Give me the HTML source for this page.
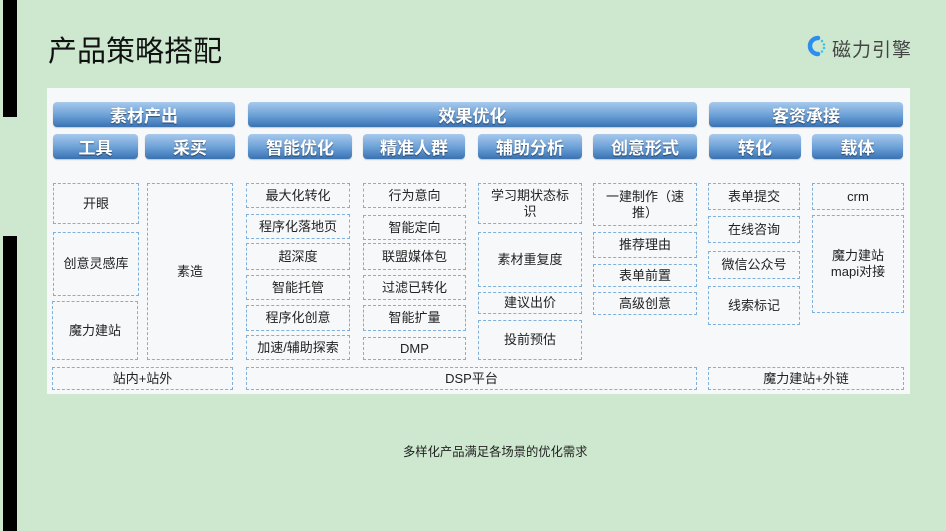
<!DOCTYPE html>
<html><head><meta charset="utf-8"><style>
*{margin:0;padding:0;box-sizing:border-box}
body{width:946px;height:531px;background:#cde8cf;position:relative;overflow:hidden;font-family:"Liberation Sans","Noto Sans CJK SC",sans-serif}
.bar{position:absolute;background:#000;left:3px;width:14px}
.title{position:absolute;left:48px;top:28px;font-size:29px;color:#111;letter-spacing:0px}
.panel{position:absolute;left:47px;top:88px;width:863px;height:306px;background:#f7f8f9}
.h{position:absolute;border-radius:4px;background:linear-gradient(#a8c9ec,#6a9fd6 55%,#3a72b2);color:#fff;font-weight:bold;font-size:17px;display:flex;align-items:center;justify-content:center;text-shadow:0 1px 1px rgba(0,0,0,.5);box-shadow:0 1px 1px rgba(0,0,0,.2)}
.b{position:absolute;border:1.5px dashed #7fb0dc;display:flex;align-items:center;justify-content:center;text-align:center;font-size:13px;color:#222;line-height:16px}
.cap{position:absolute;left:403px;top:442px;font-size:12.3px;color:#222}
.logo{position:absolute;left:832px;top:35px;font-size:19px;color:#444;letter-spacing:1px}
</style></head><body>
<div class="bar" style="top:0;height:117px"></div>
<div class="bar" style="top:236px;height:295px"></div>
<div class="title">产品策略搭配</div>
<svg style="position:absolute;left:803px;top:33px" width="26" height="26" viewBox="0 0 26 26">
<path d="M15 5 A8 8 0 1 0 15 21" fill="none" stroke="#2d8ef0" stroke-width="4.5" stroke-linecap="round"/>
<circle cx="19" cy="8" r="1.3" fill="#3cc6e8"/><circle cx="21" cy="11.5" r="1.3" fill="#3cc6e8"/><circle cx="21" cy="15" r="1.3" fill="#3cc6e8"/><circle cx="19" cy="18.5" r="1.3" fill="#3cc6e8"/>
</svg>
<div class="logo">磁力引擎</div>
<div class="panel"></div>
<div class="h" style="left:53px;top:102px;width:182px;height:25px">素材产出</div>
<div class="h" style="left:248px;top:102px;width:449px;height:25px">效果优化</div>
<div class="h" style="left:709px;top:102px;width:194px;height:25px">客资承接</div>
<div class="h" style="left:53px;top:134px;width:85px;height:25px">工具</div>
<div class="h" style="left:145px;top:134px;width:90px;height:25px">采买</div>
<div class="h" style="left:248px;top:134px;width:104px;height:25px">智能优化</div>
<div class="h" style="left:363px;top:134px;width:102px;height:25px">精准人群</div>
<div class="h" style="left:478px;top:134px;width:104px;height:25px">辅助分析</div>
<div class="h" style="left:593px;top:134px;width:104px;height:25px">创意形式</div>
<div class="h" style="left:709px;top:134px;width:92px;height:25px">转化</div>
<div class="h" style="left:812px;top:134px;width:91px;height:25px">载体</div>

<div class="b" style="left:53px;top:183px;width:86px;height:41px">开眼</div>
<div class="b" style="left:53px;top:232px;width:86px;height:64px">创意灵感库</div>
<div class="b" style="left:52px;top:301px;width:86px;height:59px">魔力建站</div>
<div class="b" style="left:147px;top:183px;width:86px;height:177px">素造</div>
<div class="b" style="left:52px;top:367px;width:181px;height:23px">站内+站外</div>

<div class="b" style="left:246px;top:183px;width:104px;height:25px">最大化转化</div>
<div class="b" style="left:246px;top:214px;width:104px;height:25px">程序化落地页</div>
<div class="b" style="left:246px;top:243px;width:104px;height:27px">超深度</div>
<div class="b" style="left:246px;top:275px;width:104px;height:25px">智能托管</div>
<div class="b" style="left:246px;top:305px;width:104px;height:26px">程序化创意</div>
<div class="b" style="left:246px;top:335px;width:104px;height:25px">加速/辅助探索</div>

<div class="b" style="left:363px;top:183px;width:103px;height:25px">行为意向</div>
<div class="b" style="left:363px;top:215px;width:103px;height:25px">智能定向</div>
<div class="b" style="left:363px;top:243px;width:103px;height:27px">联盟媒体包</div>
<div class="b" style="left:363px;top:275px;width:103px;height:25px">过滤已转化</div>
<div class="b" style="left:363px;top:305px;width:103px;height:26px">智能扩量</div>
<div class="b" style="left:363px;top:337px;width:103px;height:23px">DMP</div>

<div class="b" style="left:478px;top:183px;width:104px;height:41px">学习期状态标<br>识</div>
<div class="b" style="left:478px;top:232px;width:104px;height:55px">素材重复度</div>
<div class="b" style="left:478px;top:292px;width:104px;height:22px">建议出价</div>
<div class="b" style="left:478px;top:320px;width:104px;height:40px">投前预估</div>

<div class="b" style="left:593px;top:183px;width:104px;height:43px">一建制作（速<br>推）</div>
<div class="b" style="left:593px;top:232px;width:104px;height:26px">推荐理由</div>
<div class="b" style="left:593px;top:264px;width:104px;height:23px">表单前置</div>
<div class="b" style="left:593px;top:292px;width:104px;height:23px">高级创意</div>

<div class="b" style="left:708px;top:183px;width:92px;height:27px">表单提交</div>
<div class="b" style="left:708px;top:216px;width:92px;height:27px">在线咨询</div>
<div class="b" style="left:708px;top:251px;width:92px;height:28px">微信公众号</div>
<div class="b" style="left:708px;top:286px;width:92px;height:39px">线索标记</div>

<div class="b" style="left:812px;top:183px;width:92px;height:27px">crm</div>
<div class="b" style="left:812px;top:215px;width:92px;height:98px">魔力建站<br>mapi对接</div>

<div class="b" style="left:246px;top:367px;width:451px;height:23px">DSP平台</div>
<div class="b" style="left:708px;top:367px;width:196px;height:23px">魔力建站+外链</div>

<div class="cap">多样化产品满足各场景的优化需求</div>
</body></html>
